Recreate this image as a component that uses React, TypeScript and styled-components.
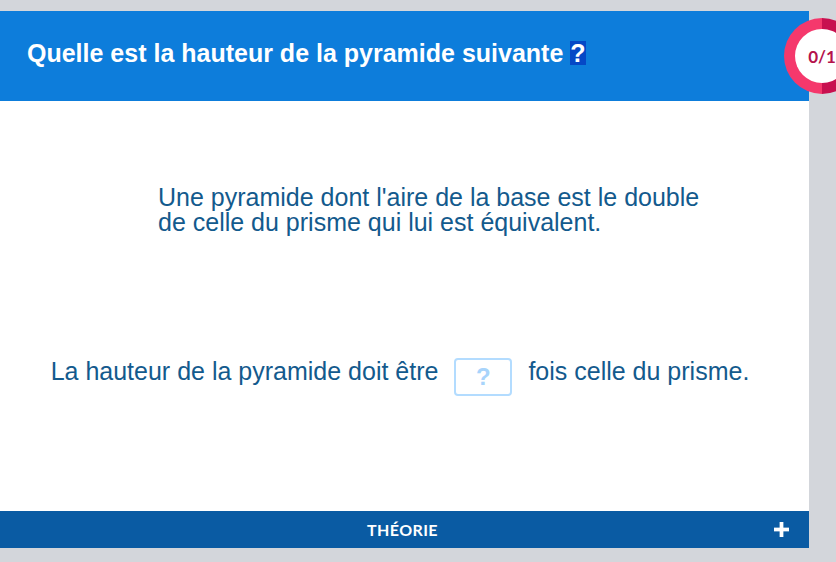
import { FC } from 'react'
import styled, { createGlobalStyle } from 'styled-components'

const GlobalStyle = createGlobalStyle`
    html, body {
        margin: 0;
        padding: 0;
        background: #d3d6db;
        font-family: "Liberation Sans", Arial, sans-serif;
    }
`;

const App: FC = () => {
    return (
        <>
            <GlobalStyle />
            <Page>
                <Card>
                    <Header>
                        <Title>
                            Quelle est la hauteur de la pyramide suivante <Marked>?</Marked>
                        </Title>
                    </Header>
                    <ScoreBadge>
                        <ScoreInner>0/1</ScoreInner>
                    </ScoreBadge>
                    <Content>
                        <Statement>
                            Une pyramide dont l'aire de la base est le double<br />
                            de celle du prisme qui lui est équivalent.
                        </Statement>
                        <AnswerLine>
                            <span>La hauteur de la pyramide doit être</span>
                            <AnswerBox>?</AnswerBox>
                            <span>fois celle du prisme.</span>
                        </AnswerLine>
                    </Content>
                    <TheoryBar>
                        <TheoryLabel>THÉORIE</TheoryLabel>
                        <PlusIcon viewBox="0 0 16 16" aria-hidden="true">
                            <rect x="6" y="0" width="4" height="16" fill="white" />
                            <rect x="0" y="6" width="16" height="4" fill="white" />
                        </PlusIcon>
                    </TheoryBar>
                </Card>
            </Page>
        </>
    )
}

const Page = styled.div`
    padding-top: 11px;
    width: 836px;
    height: 562px;
    box-sizing: border-box;
    overflow: hidden;
`;

const Card = styled.div`
    position: relative;
    width: 809px;
    background: #ffffff;
    display: flex;
    flex-direction: column;
`;

const Header = styled.div`
    height: 90px;
    background: #0d7ddb;
    display: flex;
    align-items: center;
    padding: 0 0 7px 27px;
    box-sizing: border-box;
`;

const Title = styled.h1`
    margin: 0;
    color: #ffffff;
    font-size: 25px;
    font-weight: bold;
    line-height: 28px;
`;

const Marked = styled.span`
    display: inline-block;
    background: #0548c6;
    line-height: 24px;
`;

const ScoreBadge = styled.div`
    position: absolute;
    left: 784px;
    top: 7px;
    width: 76px;
    height: 76px;
    border-radius: 50%;
    background: conic-gradient(#c8104f 0deg 180deg, #f5386c 180deg 360deg);
    display: flex;
    align-items: center;
    justify-content: center;
`;

const ScoreInner = styled.div`
    width: 54px;
    height: 54px;
    border-radius: 50%;
    background: #ffffff;
    display: flex;
    align-items: center;
    justify-content: center;
    color: #b5124c;
    font-family: Lato, "Liberation Sans", sans-serif;
    font-size: 17px;
    font-weight: bold;
`;

const Content = styled.div`
    height: 410px;
    display: flex;
    flex-direction: column;
    color: #135a8d;
    font-size: 25px;
`;

const Statement = styled.p`
    margin: 84px 0 0 158px;
    line-height: 25px;
`;

const AnswerLine = styled.div`
    margin-top: 123px;
    display: flex;
    align-items: flex-start;
    justify-content: center;
    gap: 16px;
    padding-right: 9px;
    line-height: 26px;
`;

const AnswerBox = styled.div`
    width: 58px;
    height: 38px;
    box-sizing: border-box;
    border: 2px solid #b3dcff;
    border-radius: 4px;
    display: flex;
    align-items: center;
    justify-content: center;
    color: #a8d4fb;
    font-weight: bold;
    font-size: 24px;
`;

const TheoryBar = styled.div`
    position: relative;
    height: 37px;
    background: #0a5ba3;
    display: flex;
    align-items: center;
    justify-content: center;
`;

const TheoryLabel = styled.span`
    color: #ffffff;
    font-family: Lato, "Liberation Sans", sans-serif;
    font-weight: bold;
    font-size: 16px;
    letter-spacing: 0.4px;
    margin-right: 4px;
`;

const PlusIcon = styled.svg`
    position: absolute;
    right: 20px;
    top: 11px;
    width: 15px;
    height: 15px;
`;

export default App
